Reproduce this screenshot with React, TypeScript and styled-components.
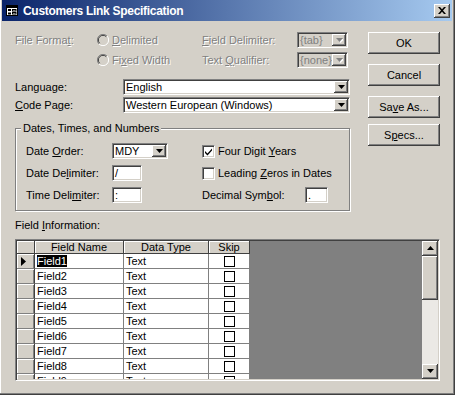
import React from "react"
import styled, { createGlobalStyle, css } from "styled-components"

const face = "#d4d0c8"
const shadow = "#808080"
const dark = "#404040"

const GlobalStyle = createGlobalStyle`
  html, body {
    margin: 0;
    padding: 0;
    background: ${face};
  }
  body {
    font-family: "Liberation Sans", Arial, sans-serif;
    font-size: 11px;
    color: #000;
  }
  u {
    text-decoration-thickness: 1px;
    text-underline-offset: 1px;
  }
`

const raised = css`
  background: ${face};
  box-shadow: inset -1px -1px 0 ${dark}, inset 1px 1px 0 #fff,
    inset -2px -2px 0 ${shadow}, inset 2px 2px 0 ${face};
`

const sunken = css`
  border: 1px solid;
  border-color: ${shadow} #fff #fff ${shadow};
  box-shadow: inset 1px 1px 0 ${dark}, inset -1px -1px 0 ${face};
`

const Window = styled.div`
  width: 455px;
  height: 395px;
  box-sizing: border-box;
  padding: 0 3px 3px 2px;
  background: ${face};
  box-shadow: inset -1px -1px 0 ${dark}, inset -2px -2px 0 ${shadow},
    inset 1px 0 0 #fff;
  display: flex;
  flex-direction: column;
  overflow: hidden;
`

const TitleBar = styled.div`
  height: 21px;
  display: flex;
  align-items: center;
  padding: 0 2px 0 4px;
  background: linear-gradient(to right, #0a246a, #a6caf0);
  color: #fff;
`

const TitleText = styled.span`
  flex: 1;
  margin-left: 5px;
  font-weight: bold;
  font-size: 12px;
  letter-spacing: -0.3px;
`

const CloseButton = styled.div`
  ${raised};
  width: 16px;
  height: 14px;
  display: flex;
  align-items: center;
  justify-content: center;
`

const Body = styled.div`
  padding: 11px 12px 0 13px;
`

const Top = styled.div`
  display: flex;
  gap: 18px;
`

const Form = styled.div`
  width: 335px;
  display: flex;
  flex-direction: column;
`

const FormatGrid = styled.div`
  display: grid;
  grid-template-columns: 82px 105px 95px 51px;
  grid-auto-rows: 16px;
  row-gap: 4px;
  align-items: center;
`

const LangGrid = styled.div`
  margin-top: 11px;
  display: grid;
  grid-template-columns: 108px 1fr;
  grid-auto-rows: 16px;
  row-gap: 2px;
  align-items: center;
`

const Label = styled.span<{ $disabled?: boolean }>`
  white-space: nowrap;
  ${(p) =>
    p.$disabled &&
    css`
      color: ${shadow};
      text-shadow: 1px 1px 0 #fff;
    `}
`

const Option = styled.div`
  display: flex;
  align-items: center;
  gap: 3px;
`

const ComboBox = styled.div<{ $disabled?: boolean; $width?: number }>`
  ${sunken};
  box-sizing: border-box;
  height: 16px;
  width: ${(p) => (p.$width ? `${p.$width}px` : "100%")};
  background: ${(p) => (p.$disabled ? face : "#fff")};
  color: ${(p) => (p.$disabled ? shadow : "#000")};
  display: flex;
  align-items: stretch;
  padding: 1px;
`

const ComboText = styled.span`
  flex: 1;
  padding-left: 1px;
  line-height: 12px;
  white-space: nowrap;
  overflow: hidden;
`

const DropButton = styled.div`
  ${raised};
  width: 14px;
  display: flex;
  align-items: center;
  justify-content: center;
`

const TextBox = styled.div<{ $width: number }>`
  ${sunken};
  box-sizing: border-box;
  height: 16px;
  width: ${(p) => p.$width}px;
  background: #fff;
  padding: 1px 2px;
  line-height: 12px;
`

const GroupBox = styled.div`
  position: relative;
  margin-top: 15px;
  border: 1px solid ${shadow};
  box-shadow: inset 1px 1px 0 #fff, 1px 1px 0 #fff;
  padding: 14px 10px 7px 10px;
  display: grid;
  grid-template-columns: 86px 90px 1fr;
  grid-auto-rows: 16px;
  row-gap: 6px;
  align-items: center;
`

const Legend = styled.span`
  position: absolute;
  top: -7px;
  left: 5px;
  padding: 0 2px;
  background: ${face};
  line-height: 13px;
`

const Check = styled.div`
  display: flex;
  align-items: center;
  gap: 3px;
`

const CheckBox = styled.div`
  ${sunken};
  box-sizing: border-box;
  width: 13px;
  height: 13px;
  background: #fff;
  display: flex;
  align-items: center;
  justify-content: center;
`

const DecimalCell = styled.div`
  display: flex;
  align-items: center;
  justify-content: space-between;
  width: 126px;
`

const Buttons = styled.div`
  width: 72px;
  display: flex;
  flex-direction: column;
`

const Button = styled.div<{ $gap?: number }>`
  ${raised};
  height: 22px;
  margin-top: ${(p) => p.$gap ?? 0}px;
  display: flex;
  align-items: center;
  justify-content: center;
`

const FieldInfo = styled.div`
  margin-top: 8px;
  line-height: 13px;
`

const GridFrame = styled.div`
  ${sunken};
  margin-top: 7px;
  box-sizing: border-box;
  width: 425px;
  height: 142px;
  padding: 1px;
  display: flex;
`

const TableArea = styled.div`
  flex: 1;
  background: ${shadow};
  overflow: hidden;
`

const Row = styled.div<{ $head?: boolean }>`
  display: grid;
  grid-template-columns: 18px 89px 85px 41px;
  width: 233px;
  height: ${(p) => (p.$head ? 13 : 15)}px;
`

const HeadCell = styled.div`
  background: ${face};
  box-shadow: inset 1px 1px 0 #fff;
  border-right: 1px solid ${dark};
  border-bottom: 1px solid ${dark};
  text-align: center;
  line-height: 12px;
`

const Selector = styled.div`
  background: ${face};
  box-shadow: inset 1px 1px 0 #fff, inset -1px 0 0 ${shadow};
  border-right: 1px solid ${dark};
  border-bottom: 1px solid ${shadow};
  display: flex;
  align-items: center;
  padding-left: 4px;
`

const Cell = styled.div<{ $center?: boolean }>`
  background: #fff;
  border-right: 1px solid ${shadow};
  border-bottom: 1px solid ${shadow};
  padding-left: ${(p) => (p.$center ? 0 : 2)}px;
  line-height: 14px;
  display: flex;
  align-items: center;
  justify-content: ${(p) => (p.$center ? "center" : "flex-start")};
`

const Selected = styled.span`
  background: #000;
  color: #fff;
  line-height: 12px;
`

const SkipBox = styled.div`
  width: 9px;
  height: 9px;
  border: 1px solid #000;
  background: #fff;
`

const ScrollBar = styled.div`
  width: 16px;
  display: flex;
  flex-direction: column;
  background: #ebe9e5;
`

const ScrollButton = styled.div`
  ${raised};
  height: 15px;
  display: flex;
  align-items: center;
  justify-content: center;
`

const Thumb = styled.div`
  ${raised};
  height: 44px;
`

const Track = styled.div`
  flex: 1;
`

const Arrow = ({ up, disabled }: { up?: boolean; disabled?: boolean }) => (
  <svg width="7" height="5" viewBox="0 0 7 5">
    {disabled && (
      <path d={up ? "M4 1 L8 5 L1 5 Z" : "M1 1 L8 1 L4.5 5 Z"} fill="#fff" />
    )}
    <path
      d={up ? "M3.5 0 L7 4 L0 4 Z" : "M0 0 L7 0 L3.5 4 Z"}
      fill={disabled ? shadow : "#000"}
    />
  </svg>
)

const Combo = ({
  value,
  width,
  disabled,
}: {
  value: string
  width?: number
  disabled?: boolean
}) => (
  <ComboBox $width={width} $disabled={disabled}>
    <ComboText>{value}</ComboText>
    <DropButton>
      <Arrow disabled={disabled} />
    </DropButton>
  </ComboBox>
)

const Radio = () => (
  <svg width="12" height="12" viewBox="0 0 12 12">
    <path d="M10 2 A5.5 5.5 0 0 0 2 10" fill="none" stroke={shadow} strokeWidth="1" />
    <path d="M9.3 2.7 A4.5 4.5 0 0 0 2.7 9.3" fill="none" stroke={dark} strokeWidth="1" />
    <path d="M2 10 A5.5 5.5 0 0 0 10 2" fill="none" stroke="#fff" strokeWidth="1" />
    <circle cx="6" cy="6" r="3.5" fill={face} />
  </svg>
)

const FormIcon = () => (
  <svg width="12" height="11" viewBox="0 0 12 11">
    <rect x="0.5" y="0.5" width="11" height="10" fill="#fff" stroke="#000" />
    <rect x="1" y="1" width="10" height="2" fill="#000" />
    <rect x="2" y="4" width="3" height="2" fill="#000" />
    <rect x="6.5" y="4.5" width="3.5" height="1.5" fill="none" stroke="#000" />
    <rect x="2" y="7.5" width="3" height="2" fill="#000" />
    <rect x="6.5" y="7.5" width="3.5" height="1.5" fill="none" stroke="#000" />
  </svg>
)

const CloseX = () => (
  <svg width="8" height="7" viewBox="0 0 8 7">
    <path d="M0 0 L2 0 L4 2.2 L6 0 L8 0 L5 3.5 L8 7 L6 7 L4 4.8 L2 7 L0 7 L3 3.5 Z" fill="#000" />
  </svg>
)

const Tick = () => (
  <svg width="9" height="9" viewBox="0 0 9 9">
    <path d="M1 4 L3.5 6.5 L8 1.5 L8 3.5 L3.5 8.5 L1 6 Z" fill="#000" />
  </svg>
)

const RowMarker = () => (
  <svg width="5" height="9" viewBox="0 0 5 9">
    <path d="M0 0 L5 4.5 L0 9 Z" fill="#000" />
  </svg>
)

const fields = [1, 2, 3, 4, 5, 6, 7, 8, 9]

const App = () => {
  return (
    <>
      <GlobalStyle />
      <Window>
        <TitleBar>
          <FormIcon />
          <TitleText>Customers Link Specification</TitleText>
          <CloseButton>
            <CloseX />
          </CloseButton>
        </TitleBar>
        <Body>
          <Top>
            <Form>
              <FormatGrid>
                <Label $disabled>
                  File Forma<u>t</u>:
                </Label>
                <Option>
                  <Radio />
                  <Label $disabled>
                    <u>D</u>elimited
                  </Label>
                </Option>
                <Label $disabled>
                  <u>F</u>ield Delimiter:
                </Label>
                <Combo value="{tab}" disabled />

                <span />
                <Option>
                  <Radio />
                  <Label $disabled>
                    Fi<u>x</u>ed Width
                  </Label>
                </Option>
                <Label $disabled>
                  Text <u>Q</u>ualifier:
                </Label>
                <Combo value="{none}" disabled />
              </FormatGrid>

              <LangGrid>
                <Label>Language:</Label>
                <Combo value="English" />
                <Label>
                  <u>C</u>ode Page:
                </Label>
                <Combo value="Western European (Windows)" />
              </LangGrid>

              <GroupBox>
                <Legend>Dates, Times, and Numbers</Legend>

                <Label>
                  Date <u>O</u>rder:
                </Label>
                <Combo value="MDY" width={56} />
                <Check>
                  <CheckBox>
                    <Tick />
                  </CheckBox>
                  <Label>
                    Four Digit <u>Y</u>ears
                  </Label>
                </Check>

                <Label>
                  Date De<u>l</u>imiter:
                </Label>
                <TextBox $width={30}>/</TextBox>
                <Check>
                  <CheckBox />
                  <Label>
                    Leading <u>Z</u>eros in Dates
                  </Label>
                </Check>

                <Label>
                  Time Deli<u>m</u>iter:
                </Label>
                <TextBox $width={30}>:</TextBox>
                <DecimalCell>
                  <Label>
                    Decimal Sym<u>b</u>ol:
                  </Label>
                  <TextBox $width={23}>.</TextBox>
                </DecimalCell>
              </GroupBox>
            </Form>

            <Buttons>
              <Button>OK</Button>
              <Button $gap={10}>Cancel</Button>
              <Button $gap={10}>
                Sa<u>v</u>e As...
              </Button>
              <Button $gap={6}>
                S<u>p</u>ecs...
              </Button>
            </Buttons>
          </Top>

          <FieldInfo>
            Field <u>I</u>nformation:
          </FieldInfo>

          <GridFrame>
            <TableArea>
              <Row $head>
                <HeadCell />
                <HeadCell>Field Name</HeadCell>
                <HeadCell>Data Type</HeadCell>
                <HeadCell>Skip</HeadCell>
              </Row>
              {fields.map((n) => (
                <Row key={n}>
                  <Selector>{n === 1 && <RowMarker />}</Selector>
                  <Cell>
                    {n === 1 ? <Selected>Field1</Selected> : `Field${n}`}
                  </Cell>
                  <Cell>Text</Cell>
                  <Cell $center>
                    <SkipBox />
                  </Cell>
                </Row>
              ))}
            </TableArea>
            <ScrollBar>
              <ScrollButton>
                <Arrow up />
              </ScrollButton>
              <Thumb />
              <Track />
              <ScrollButton>
                <Arrow />
              </ScrollButton>
            </ScrollBar>
          </GridFrame>
        </Body>
      </Window>
    </>
  )
}

export default App
